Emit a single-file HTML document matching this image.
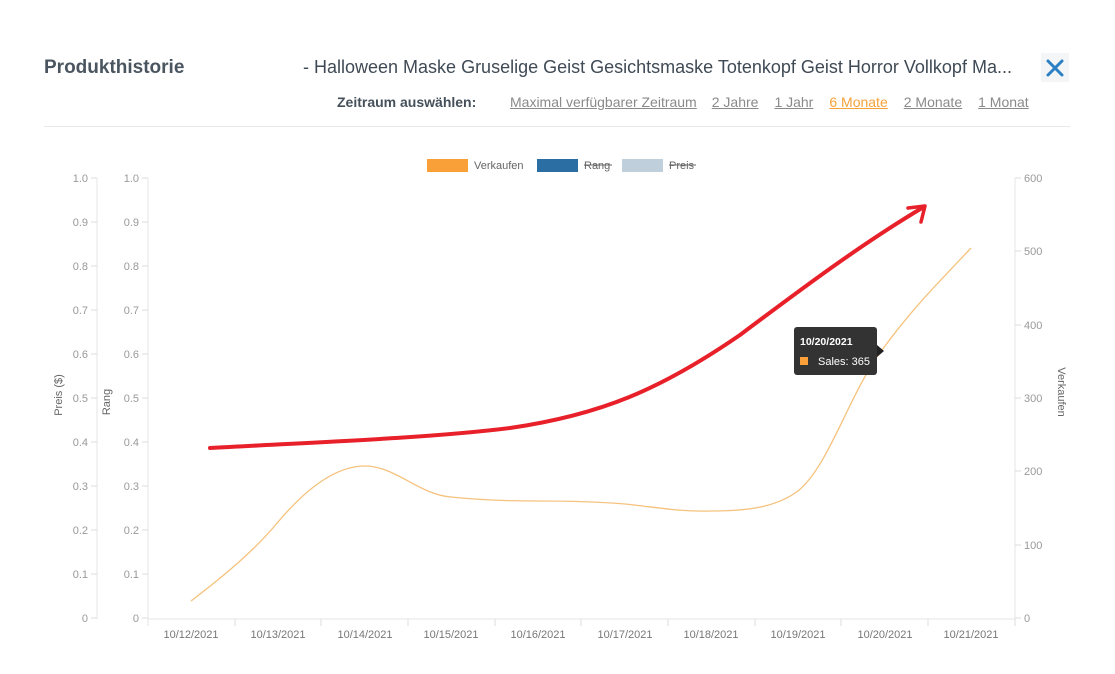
<!DOCTYPE html>
<html><head><meta charset="utf-8"><style>
body{margin:0;background:#fff;font-family:"Liberation Sans",sans-serif;}
.wrap{position:relative;width:1115px;height:674px;overflow:hidden;}
.t{position:absolute;white-space:nowrap;}
a{color:#8a8a8a;text-decoration:underline;}
</style></head><body><div class="wrap">
<div class="t" style="left:44px;top:57px;font-size:19px;font-weight:bold;color:#4a5560;">Produkthistorie</div>
<div class="t" style="left:303px;top:57px;font-size:18px;color:#3f4a55;">- Halloween Maske Gruselige Geist Gesichtsmaske Totenkopf Geist Horror Vollkopf Ma...</div>
<div style="position:absolute;left:1041px;top:53px;width:28px;height:29px;background:#f3f5f7;"></div>
<svg style="position:absolute;left:1041px;top:53px" width="28" height="29"><path d="M7 8 L21 22 M21 8 L7 22" stroke="#2c7fc2" stroke-width="3" stroke-linecap="round"/></svg>
<div class="t" style="left:337px;top:94px;font-size:14px;font-weight:bold;color:#45505a;">Zeitraum auswählen:</div>
<div class="t" style="left:510px;top:94px;font-size:14px;">
<a>Maximal verfügbarer Zeitraum</a><span style="display:inline-block;width:15px"></span><a>2 Jahre</a><span style="display:inline-block;width:16px"></span><a>1 Jahr</a><span style="display:inline-block;width:16px"></span><a style="color:#f5a13a">6 Monate</a><span style="display:inline-block;width:16px"></span><a>2 Monate</a><span style="display:inline-block;width:16px"></span><a>1 Monat</a></div>
<div style="position:absolute;left:44px;top:126px;width:1026px;height:1px;background:#e6e8ea;"></div>

<svg style="position:absolute;left:0;top:0" width="1115" height="674" font-family="Liberation Sans, sans-serif" font-size="11" fill="#777">
<rect x="427" y="159" width="41" height="13" fill="#f9a138"/>
<text x="474" y="169" fill="#666">Verkaufen</text>
<rect x="537" y="159" width="41" height="13" fill="#2a6ea3"/>
<text x="584" y="169" fill="#666">Rang</text><line x1="584" y1="165" x2="612" y2="165" stroke="#666"/>
<rect x="622" y="159" width="41" height="13" fill="#bfcfdc"/>
<text x="669" y="169" fill="#666">Preis</text><line x1="669" y1="165" x2="696" y2="165" stroke="#666"/>
<g stroke="#e5e5e5">
<line x1="97" y1="178" x2="97" y2="619"/>
<line x1="148" y1="178" x2="148" y2="626"/>
<line x1="1015" y1="178" x2="1015" y2="619"/>
<line x1="148" y1="619" x2="1015" y2="619"/>
</g>
<g stroke="#ddd">
<line x1="91" x2="97" y1="178" y2="178"/><line x1="91" x2="97" y1="222" y2="222"/><line x1="91" x2="97" y1="266" y2="266"/><line x1="91" x2="97" y1="310" y2="310"/><line x1="91" x2="97" y1="354" y2="354"/><line x1="91" x2="97" y1="398" y2="398"/><line x1="91" x2="97" y1="442" y2="442"/><line x1="91" x2="97" y1="486" y2="486"/><line x1="91" x2="97" y1="530" y2="530"/><line x1="91" x2="97" y1="574" y2="574"/><line x1="91" x2="97" y1="618" y2="618"/>
<line x1="142" x2="148" y1="178" y2="178"/><line x1="142" x2="148" y1="222" y2="222"/><line x1="142" x2="148" y1="266" y2="266"/><line x1="142" x2="148" y1="310" y2="310"/><line x1="142" x2="148" y1="354" y2="354"/><line x1="142" x2="148" y1="398" y2="398"/><line x1="142" x2="148" y1="442" y2="442"/><line x1="142" x2="148" y1="486" y2="486"/><line x1="142" x2="148" y1="530" y2="530"/><line x1="142" x2="148" y1="574" y2="574"/><line x1="142" x2="148" y1="618" y2="618"/>
<line x1="1015" x2="1021" y1="178" y2="178"/><line x1="1015" x2="1021" y1="251" y2="251"/><line x1="1015" x2="1021" y1="325" y2="325"/><line x1="1015" x2="1021" y1="398" y2="398"/><line x1="1015" x2="1021" y1="471" y2="471"/><line x1="1015" x2="1021" y1="545" y2="545"/><line x1="1015" x2="1021" y1="618" y2="618"/>
<line x1="235" x2="235" y1="619" y2="626"/><line x1="321" x2="321" y1="619" y2="626"/><line x1="408" x2="408" y1="619" y2="626"/><line x1="495" x2="495" y1="619" y2="626"/><line x1="581" x2="581" y1="619" y2="626"/><line x1="668" x2="668" y1="619" y2="626"/><line x1="755" x2="755" y1="619" y2="626"/><line x1="841" x2="841" y1="619" y2="626"/><line x1="928" x2="928" y1="619" y2="626"/><line x1="1015" x2="1015" y1="619" y2="626"/>
</g>
<g text-anchor="end" fill="#999">
<text x="88" y="182">1.0</text><text x="88" y="226">0.9</text><text x="88" y="270">0.8</text><text x="88" y="314">0.7</text><text x="88" y="358">0.6</text><text x="88" y="402">0.5</text><text x="88" y="446">0.4</text><text x="88" y="490">0.3</text><text x="88" y="534">0.2</text><text x="88" y="578">0.1</text><text x="88" y="622">0</text>
<text x="139" y="182">1.0</text><text x="139" y="226">0.9</text><text x="139" y="270">0.8</text><text x="139" y="314">0.7</text><text x="139" y="358">0.6</text><text x="139" y="402">0.5</text><text x="139" y="446">0.4</text><text x="139" y="490">0.3</text><text x="139" y="534">0.2</text><text x="139" y="578">0.1</text><text x="139" y="622">0</text>
</g>
<g fill="#999">
<text x="1024" y="182">600</text><text x="1024" y="255">500</text><text x="1024" y="329">400</text><text x="1024" y="402">300</text><text x="1024" y="475">200</text><text x="1024" y="549">100</text><text x="1024" y="622">0</text>
</g>
<g text-anchor="middle" fill="#777">
<text x="191" y="638">10/12/2021</text><text x="278" y="638">10/13/2021</text><text x="365" y="638">10/14/2021</text><text x="451" y="638">10/15/2021</text><text x="538" y="638">10/16/2021</text><text x="625" y="638">10/17/2021</text><text x="711" y="638">10/18/2021</text><text x="798" y="638">10/19/2021</text><text x="885" y="638">10/20/2021</text><text x="971" y="638">10/21/2021</text>
</g>
<text transform="translate(62,395) rotate(-90)" text-anchor="middle" fill="#666">Preis ($)</text>
<text transform="translate(110,402) rotate(-90)" text-anchor="middle" fill="#666">Rang</text>
<text transform="translate(1058,392) rotate(90)" text-anchor="middle" fill="#666">Verkaufen</text>
<path d="M191 601 C225 575 255 550 278 522 C305 490 335 466 365 466 C395 466 420 495 451 497 C480 500 510 501 538 501 C570 501 600 502 625 504 C655 507 680 512 711 511 C745 511 775 508 798 491 C830 465 850 390 885 346 C915 305 945 276 971 248" fill="none" stroke="#f5c27e" stroke-width="1.3"/>
<path d="M210 448 C320 442 430 438 510 428 C600 415 660 390 740 335 C800 290 860 245 922 208" fill="none" stroke="#e8202a" stroke-width="4" stroke-linecap="round"/>
<path d="M908 208 L925 206 L921 222" fill="none" stroke="#e8202a" stroke-width="3.5" stroke-linecap="round" stroke-linejoin="round"/>
<rect x="794" y="327" width="83" height="48" rx="3" fill="#333"/>
<path d="M877 345 L884 351 L877 357 Z" fill="#222"/>
<text x="800" y="345" fill="#fff" font-weight="bold" font-size="10.5">10/20/2021</text>
<rect x="800" y="357" width="8" height="8" fill="#f9a138"/>
<text x="818" y="365" fill="#fff" font-size="11">Sales: 365</text>
</svg>
</div></body></html>
